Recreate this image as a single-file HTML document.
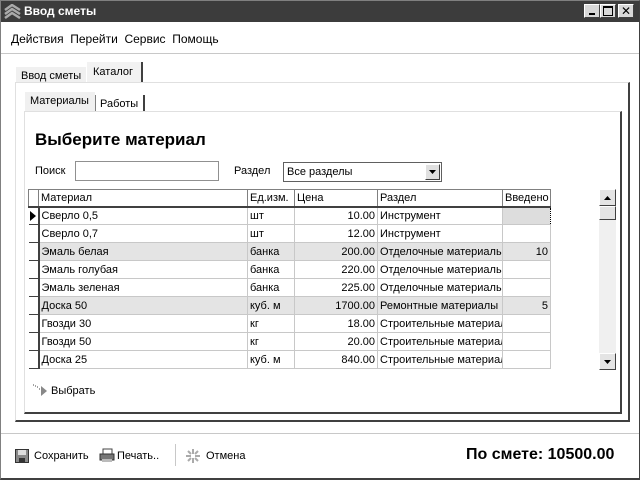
<!DOCTYPE html>
<html><head><meta charset="utf-8"><style>
*{box-sizing:border-box;margin:0;padding:0}
body{width:640px;height:480px;overflow:hidden;background:#fff;font-family:"Liberation Sans","DejaVu Sans",sans-serif;font-size:11px;color:#000;position:relative}
.a{position:absolute}
.win{left:0;top:0;width:640px;height:480px;border:1px solid #808080;border-right-color:#404040;border-bottom:2px solid #404040}
.title{left:1px;top:1px;width:638px;height:21px;background:#3c3c3c;color:#fff;font-weight:bold;font-size:12px}
.btn{top:4px;width:16px;height:14px;background:#d8d8d8;border:1px solid;border-color:#fff #404040 #404040 #fff;font-size:11px;line-height:12px;text-align:center;color:#000;font-weight:bold}
table{border-collapse:collapse;position:absolute;left:28px;top:189px;table-layout:fixed;width:522px}
td{height:18px;border:1px solid #c8c8c8;padding:0 2px;white-space:nowrap;overflow:hidden;font-size:11px}
tr.h td{height:17px;border:1px solid #808080;border-bottom:2px solid #404040}
td.i{border:none;border-bottom:1px solid #404040;border-right:2px solid #404040;padding:0}
td.r{text-align:right}
tr.g td{background:#e4e4e4}
tr.g td.i{background:#fff}
</style></head><body>
<div class="a win"></div>
<div class="a title"><svg class="a" style="left:3px;top:3px" width="17" height="15"><path d="M1 6 L8 1 L16 6 M1 10 L8 5 L16 10 M1 14 L8 9 L16 14" stroke="#aaa" stroke-width="2.5" fill="none"/></svg><span class="a" style="left:23px;top:3px">Ввод сметы</span></div>
<div class="a btn" style="left:584px"><span class="a" style="left:4px;top:8px;width:6px;height:2px;background:#000"></span></div>
<div class="a btn" style="left:600px"><span class="a" style="left:2px;top:1px;width:10px;height:10px;border:1px solid #000;border-top-width:2px"></span></div>
<div class="a btn" style="left:618px;font-size:12px">✕</div>
<div class="a" style="left:11px;top:32px;font-size:12px">Действия&nbsp; Перейти&nbsp; Сервис&nbsp; Помощь</div>
<div class="a" style="left:1px;top:53px;width:638px;height:1px;background:#c8c8c8"></div>
<div class="a" style="left:16px;top:66px;width:70px;height:17px;background:#f0f0f0;border-top:1px solid #fff"><span class="a" style="left:5px;top:3px">Ввод сметы</span></div>
<div class="a" style="left:86px;top:62px;width:57px;height:21px;background:#f2f2f2;border-right:2px solid #404040;border-left:1px solid #fff"><span class="a" style="left:6px;top:4px">Каталог</span></div>
<div class="a" style="left:15px;top:82px;width:615px;height:340px;border:1px solid #e0e0e0;border-right:2px solid #404040;border-bottom:2px solid #404040"></div>
<div class="a" style="left:25px;top:92px;width:70px;height:20px;background:#f0f0f0"><span class="a" style="left:5px;top:3px">Материалы</span></div>
<div class="a" style="left:95px;top:95px;width:50px;height:17px;border-right:2px solid #404040;border-left:1px solid #808080"><span class="a" style="left:4px;top:3px">Работы</span></div>
<div class="a" style="left:24px;top:111px;width:598px;height:303px;border:1px solid #e0e0e0;border-right:2px solid #404040;border-bottom:2px solid #404040"></div>
<div class="a" style="left:35px;top:130px;font-size:17px;font-weight:bold">Выберите материал</div>
<div class="a" style="left:35px;top:165px">Поиск</div>
<div class="a" style="left:75px;top:161px;width:144px;height:20px;border:1px solid #909090"></div>
<div class="a" style="left:234px;top:165px">Раздел</div>
<div class="a" style="left:283px;top:162px;width:159px;height:20px;border:1px solid #606060"><span class="a" style="left:3px;top:3px">Все разделы</span><span class="a" style="left:141px;top:1px;width:15px;height:16px;background:#e0e0e0;border:1px solid;border-color:#fff #404040 #404040 #fff"><svg class="a" style="left:3px;top:5px" width="8" height="5"><path d="M0 0H7L3.5 4Z"/></svg></span></div>
<table>
<colgroup><col style="width:10px"><col style="width:209px"><col style="width:47px"><col style="width:83px"><col style="width:125px"><col style="width:48px"></colgroup>
<tr class="h"><td class="i"></td><td>Материал</td><td>Ед.изм.</td><td>Цена</td><td>Раздел</td><td>Введено</td></tr>
<tr><td class="i"><svg width="8" height="12" style="display:block"><path d="M1 1L7 6L1 11Z"/></svg></td><td>Сверло 0,5</td><td>шт</td><td class="r">10.00</td><td>Инструмент</td><td style="background:#ddd;border:1px dotted #000"></td></tr>
<tr><td class="i"></td><td>Сверло 0,7</td><td>шт</td><td class="r">12.00</td><td>Инструмент</td><td></td></tr>
<tr class="g"><td class="i"></td><td>Эмаль белая</td><td>банка</td><td class="r">200.00</td><td>Отделочные материалы</td><td class="r">10</td></tr>
<tr><td class="i"></td><td>Эмаль голубая</td><td>банка</td><td class="r">220.00</td><td>Отделочные материалы</td><td></td></tr>
<tr><td class="i"></td><td>Эмаль зеленая</td><td>банка</td><td class="r">225.00</td><td>Отделочные материалы</td><td></td></tr>
<tr class="g"><td class="i"></td><td>Доска 50</td><td>куб. м</td><td class="r">1700.00</td><td>Ремонтные материалы</td><td class="r">5</td></tr>
<tr><td class="i"></td><td>Гвозди 30</td><td>кг</td><td class="r">18.00</td><td>Строительные материалы</td><td></td></tr>
<tr><td class="i"></td><td>Гвозди 50</td><td>кг</td><td class="r">20.00</td><td>Строительные материалы</td><td></td></tr>
<tr><td class="i"></td><td>Доска 25</td><td>куб. м</td><td class="r">840.00</td><td>Строительные материалы</td><td></td></tr>
</table>
<div class="a" style="left:599px;top:189px;width:17px;height:181px;background:#f0f0f0"></div>
<div class="a" style="left:599px;top:189px;width:17px;height:17px;background:#e4e4e4;border:1px solid;border-color:#fff #404040 #404040 #fff"><svg class="a" style="left:4px;top:6px" width="8" height="5"><path d="M0 4H7L3.5 0Z"/></svg></div>
<div class="a" style="left:599px;top:206px;width:17px;height:14px;background:#e4e4e4;border:1px solid;border-color:#fff #404040 #404040 #fff"></div>
<div class="a" style="left:599px;top:353px;width:17px;height:17px;background:#e4e4e4;border:1px solid;border-color:#fff #404040 #404040 #fff"><svg class="a" style="left:4px;top:6px" width="8" height="5"><path d="M0 0H7L3.5 4Z"/></svg></div>
<svg class="a" style="left:32px;top:383px" width="18" height="14"><path d="M1 2h1M3 3h1M5 4h1M7 6h1" stroke="#444"/><path d="M9 3L15 8L9 13Z" fill="#888"/></svg>
<div class="a" style="left:51px;top:385px">Выбрать</div>
<div class="a" style="left:1px;top:433px;width:638px;height:1px;background:#c8c8c8"></div>
<svg class="a" style="left:15px;top:449px" width="14" height="14"><rect x="0.5" y="0.5" width="13" height="13" fill="#888" stroke="#333"/><rect x="3" y="1" width="8" height="5" fill="#ddd"/><rect x="4" y="9" width="6" height="4" fill="#333"/></svg>
<div class="a" style="left:34px;top:450px">Сохранить</div>
<svg class="a" style="left:99px;top:448px" width="16" height="15"><rect x="4" y="1" width="9" height="5" fill="#fff" stroke="#444"/><path d="M1 6h14v6H1z" fill="#777" stroke="#333"/><rect x="3" y="11" width="10" height="3" fill="#bbb"/></svg>
<div class="a" style="left:117px;top:450px">Печать..</div>
<div class="a" style="left:175px;top:444px;width:1px;height:22px;background:#c8c8c8"></div>
<svg class="a" style="left:186px;top:449px" width="14" height="14"><path d="M7 0v5M7 9v5M0 7h5M9 7h5M2 2l3 3M9 9l3 3M12 2l-3 3M2 12l3-3" stroke="#aaa" stroke-width="2"/></svg>
<div class="a" style="left:206px;top:450px">Отмена</div>
<div class="a" style="left:466px;top:446px;font-size:16px;font-weight:bold">По смете: 10500.00</div>
</body></html>
